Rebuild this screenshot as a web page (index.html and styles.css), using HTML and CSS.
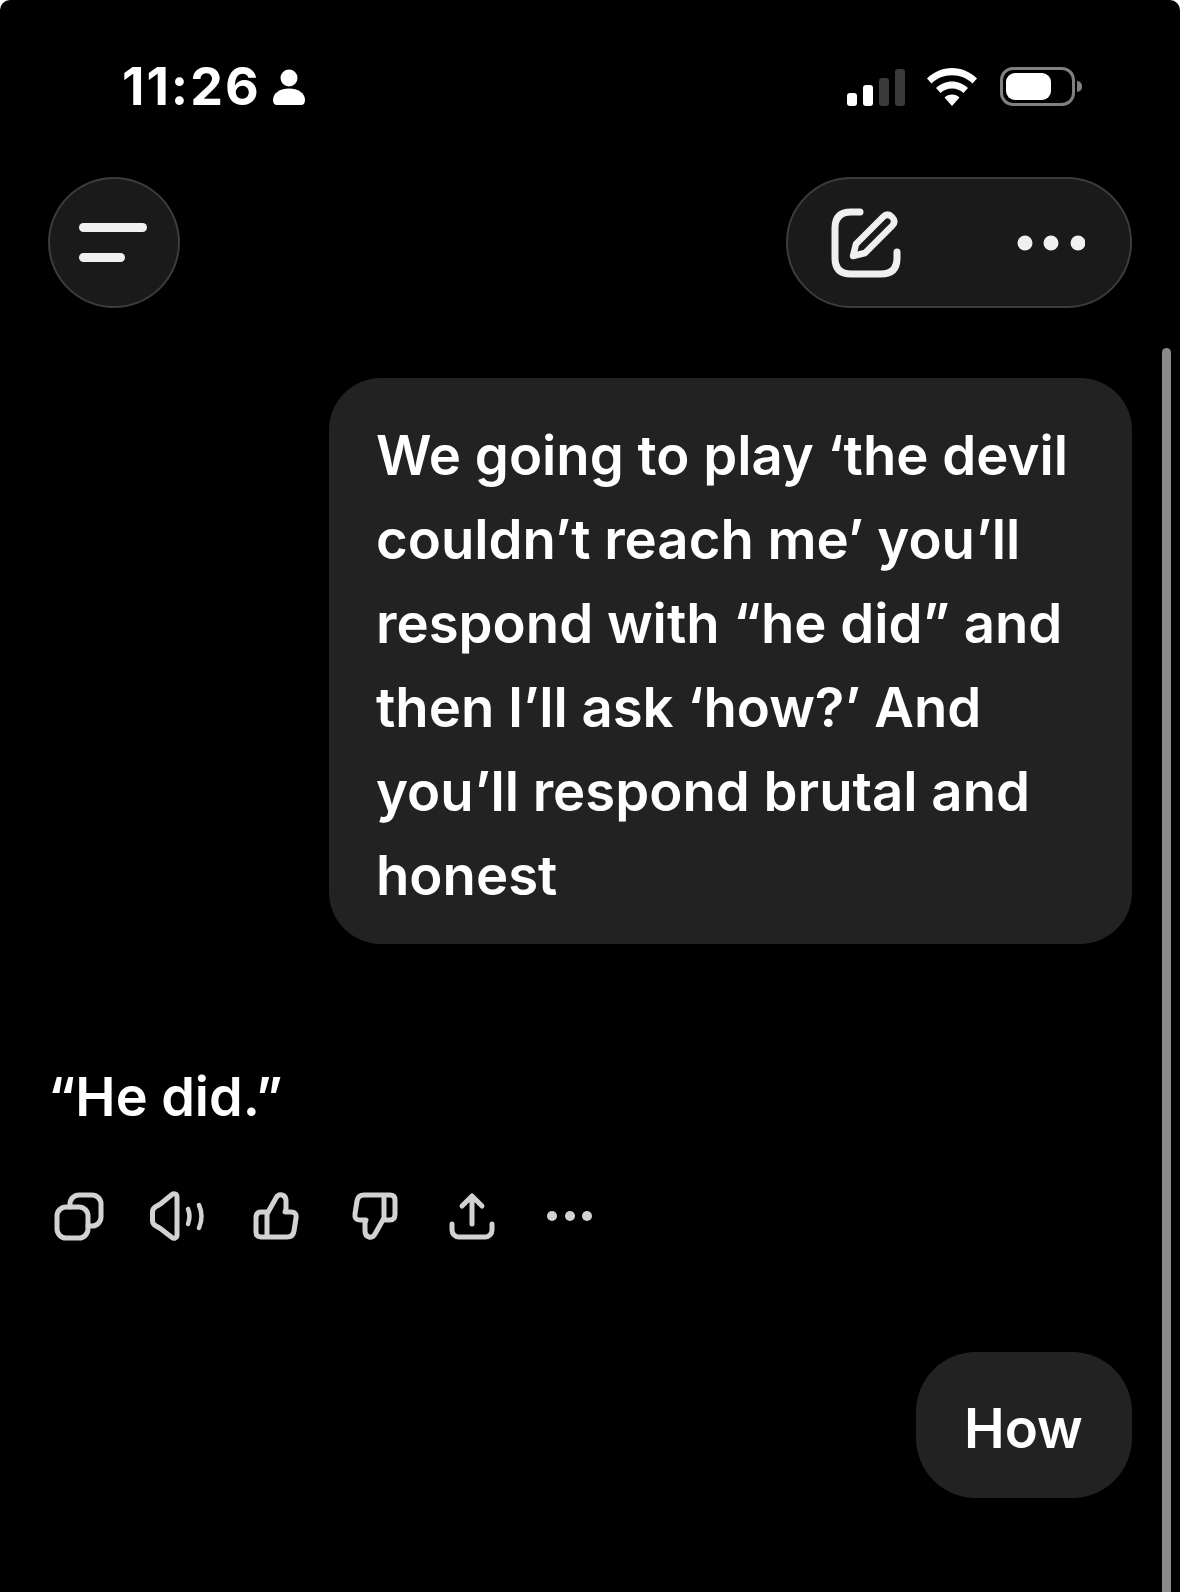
FILE: index.html
```html
<!DOCTYPE html>
<html lang="en">
<head>
<meta charset="utf-8">
<title>Chat</title>
<link rel="stylesheet" href="styles.css">
</head>
<body>
<div class="screen">
  <div class="status">
    <div class="status-left">
      <span class="time">11:26</span>
      <svg class="person" viewBox="0 0 34 36"><circle cx="17" cy="9" r="8.500"/><path d="M1 31C1 24 8 19.500 17 19.500S33 24 33 31Q33 36 29 36H5Q1 36 1 31Z"/></svg>
    </div>
    <div class="status-right">
      <div class="signal"><i class="bar b1"></i><i class="bar b2"></i><i class="bar b3 off"></i><i class="bar b4 off"></i></div>
      <svg class="wifi" viewBox="0 0 50 38"><path d="M25 0C34.500 0 43 3.800 50 10.500L45.500 15.500C39.800 10 33 7.200 25 7.200S10.200 10 4.500 15.500L0 10.500C7 3.800 15.500 0 25 0Z"/><path d="M25 13.500C31 13.500 36.500 16 41 20L36.500 25C33.200 22 29.500 20.500 25 20.500S16.800 22 13.500 25L9 20C13.500 16 19 13.500 25 13.500Z"/><path d="M25 26.500C28 26.500 30.500 27.500 32.500 29.500L25 38L17.500 29.500C19.500 27.500 22 26.500 25 26.500Z"/></svg>
      <div class="battery"><div class="battery-body"><div class="battery-fill"></div></div><div class="battery-nub"></div></div>
    </div>
  </div>

  <header class="toolbar">
    <button class="menu-btn" aria-label="Menu"><span class="line long"></span><span class="line short"></span></button>
    <div class="actions">
      <svg class="edit" viewBox="0 0 70 70" fill="none"><path d="M29 4H20Q4 4 4 20V50Q4 66 20 66H50Q66 66 66 50V44"/><path class="pencil" d="M22 48L25 36L52 9Q56.500 4.500 61 9Q65.500 13.500 61 18L34 45Z"/></svg>
      <svg class="more" viewBox="0 0 68 16"><circle cx="8" cy="8" r="7.500"/><circle cx="34" cy="8" r="7.500"/><circle cx="61" cy="8" r="7.500"/></svg>
    </div>
  </header>

  <main class="chat">
    <div class="bubble long-bubble">We going to play ‘the devil couldn’t reach me’ you’ll respond with “he did” and then I’ll ask ‘how?’ And you’ll respond brutal and honest</div>
    <p class="reply">“He did.”</p>
    <div class="reply-tools">
      <svg viewBox="0 0 56 56"><rect x="6" y="19" width="31" height="31" rx="9"/><path d="M19 19V16A9 9 0 0 1 28 7H41A9 9 0 0 1 50 16V29A9 9 0 0 1 41 38H37"/></svg>
      <svg viewBox="0 0 56 56"><path d="M28 9C28 6 25 5 23 6.500L12 15.500Q10 17 7 18.500Q3.500 20.500 3.500 24V33Q3.500 36 7 38Q10 39.500 12 41L23 49.500C25 51 28 50 28 47Z"/><path class="thin" d="M39 21Q42 28 39 36"/><path class="thin" d="M50 17Q55 28 50 40"/></svg>
      <svg viewBox="0 0 56 56"><path d="M20 26L29 10Q31 6 35 7Q39 8 39 13V21L38 24H44Q50 24 49 30L47 43Q46 49 40 49H14Q9 49 9 44V30Q9 24 14 24H20V49"/></svg>
      <svg viewBox="0 0 56 56"><path transform="rotate(180 29.500 28)" d="M20 26L29 10Q31 6 35 7Q39 8 39 13V21L38 24H44Q50 24 49 30L47 43Q46 49 40 49H14Q9 49 9 44V30Q9 24 14 24H20V49"/></svg>
      <svg viewBox="0 0 56 56"><path d="M29 36V9M19 18L29 8L39 18"/><path d="M9 36V42A7 7 0 0 0 16 49H42A7 7 0 0 0 49 42V36"/></svg>
      <svg viewBox="0 0 56 56"><circle class="dot" cx="11" cy="28" r="5"/><circle class="dot" cx="29" cy="28" r="5"/><circle class="dot" cx="46" cy="28" r="5"/></svg>
    </div>
    <div class="bubble short-bubble">How</div>
  </main>
  <div class="scrollbar"></div>
</div>
</body>
</html>
```

FILE: styles.css
```css
* { box-sizing: border-box; }
html, body { margin: 0; background: #fff; }
.screen {
  position: relative;
  width: 1180px;
  height: 1592px;
  overflow: hidden;
  background: #000;
  border-radius: 10px 10px 0 0;
  color: #fff;
  font-family: Inter, "Liberation Sans", sans-serif;
}
.status {
  height: 177px;
  padding: 67px 98px 0 122px;
  display: flex;
  justify-content: space-between;
  align-items: flex-start;
}
.status-left { display: flex; align-items: center; gap: 11px; height: 39px; }
.time { font-size: 52px; font-weight: 700; line-height: 39px; letter-spacing: 2px; }
.person { width: 34px; height: 36px; fill: #fff; }
.status-right { display: flex; align-items: flex-start; }
.signal { display: flex; align-items: flex-end; gap: 6px; height: 38px; margin-top: 1px; margin-right: 22px; }
.bar { display: block; width: 10px; border-radius: 3px; background: #fff; }
.b1 { height: 13px; }
.b2 { height: 21px; }
.b3 { height: 28px; }
.b4 { height: 37px; }
.off { background: #3a3a3a; }
.wifi { width: 50px; height: 38px; margin-top: 1px; fill: #fff; margin-right: 23px; }
.battery { display: flex; align-items: center; gap: 2px; }
.battery-body { width: 75px; height: 39px; border: 3px solid #808080; border-radius: 13px; padding: 3px; }
.battery-fill { width: 45px; height: 100%; background: #fff; border-radius: 9px; }
.battery-nub { width: 5px; height: 11px; background: #808080; border-radius: 0 5px 5px 0; }

.toolbar { display: flex; justify-content: space-between; padding: 0 48px; }
.menu-btn {
  width: 132px;
  height: 131px;
  padding: 0 0 0 29px;
  border-radius: 50%;
  border: 2px solid #3c3c3c;
  background: #1a1a1a;
  display: flex;
  flex-direction: column;
  align-items: flex-start;
  justify-content: center;
  gap: 21px;
}
.line { display: block; height: 9px; border-radius: 5px; background: #f0f0f0; }
.long { width: 68px; }
.short { width: 46px; }
.actions {
  width: 346px;
  height: 131px;
  border-radius: 66px;
  border: 2px solid #3c3c3c;
  background: #1a1a1a;
  display: flex;
  align-items: center;
  justify-content: space-between;
  padding: 0 45px 0 43px;
}
.edit { width: 70px; height: 70px; stroke: #f0f0f0; stroke-width: 7; stroke-linecap: round; stroke-linejoin: round; }
.edit .pencil { stroke-width: 6.500; }
.more { width: 68px; height: 16px; fill: #f0f0f0; }

.chat { display: flex; flex-direction: column; padding: 70px 48px 0 48px; }
.bubble { background: #222; font-size: 54.500px; line-height: 84px; font-weight: 600; align-self: flex-end; }
.long-bubble { width: 803px; padding: 35px 10px 27px 47px; border-radius: 52px; }
.short-bubble { width: 216px; height: 146px; margin-top: 108px; border-radius: 60px; padding: 34px 0 0 48px; }
.reply { margin: 111px 0 0; font-size: 54px; line-height: 84px; font-weight: 600; }
.reply-tools { display: flex; gap: 42px; margin-top: 49px; margin-left: 3px; }
.reply-tools svg { width: 56px; height: 56px; fill: none; stroke: #d2d2d2; stroke-width: 5; stroke-linecap: round; stroke-linejoin: round; }
.reply-tools .thin { stroke-width: 4.500; }
.reply-tools .dot { fill: #d2d2d2; stroke: none; }
.scrollbar {
  position: absolute;
  left: 1162px;
  top: 348px;
  bottom: -10px;
  width: 9px;
  border-radius: 5px;
  background: #8a8a8a;
}
```
